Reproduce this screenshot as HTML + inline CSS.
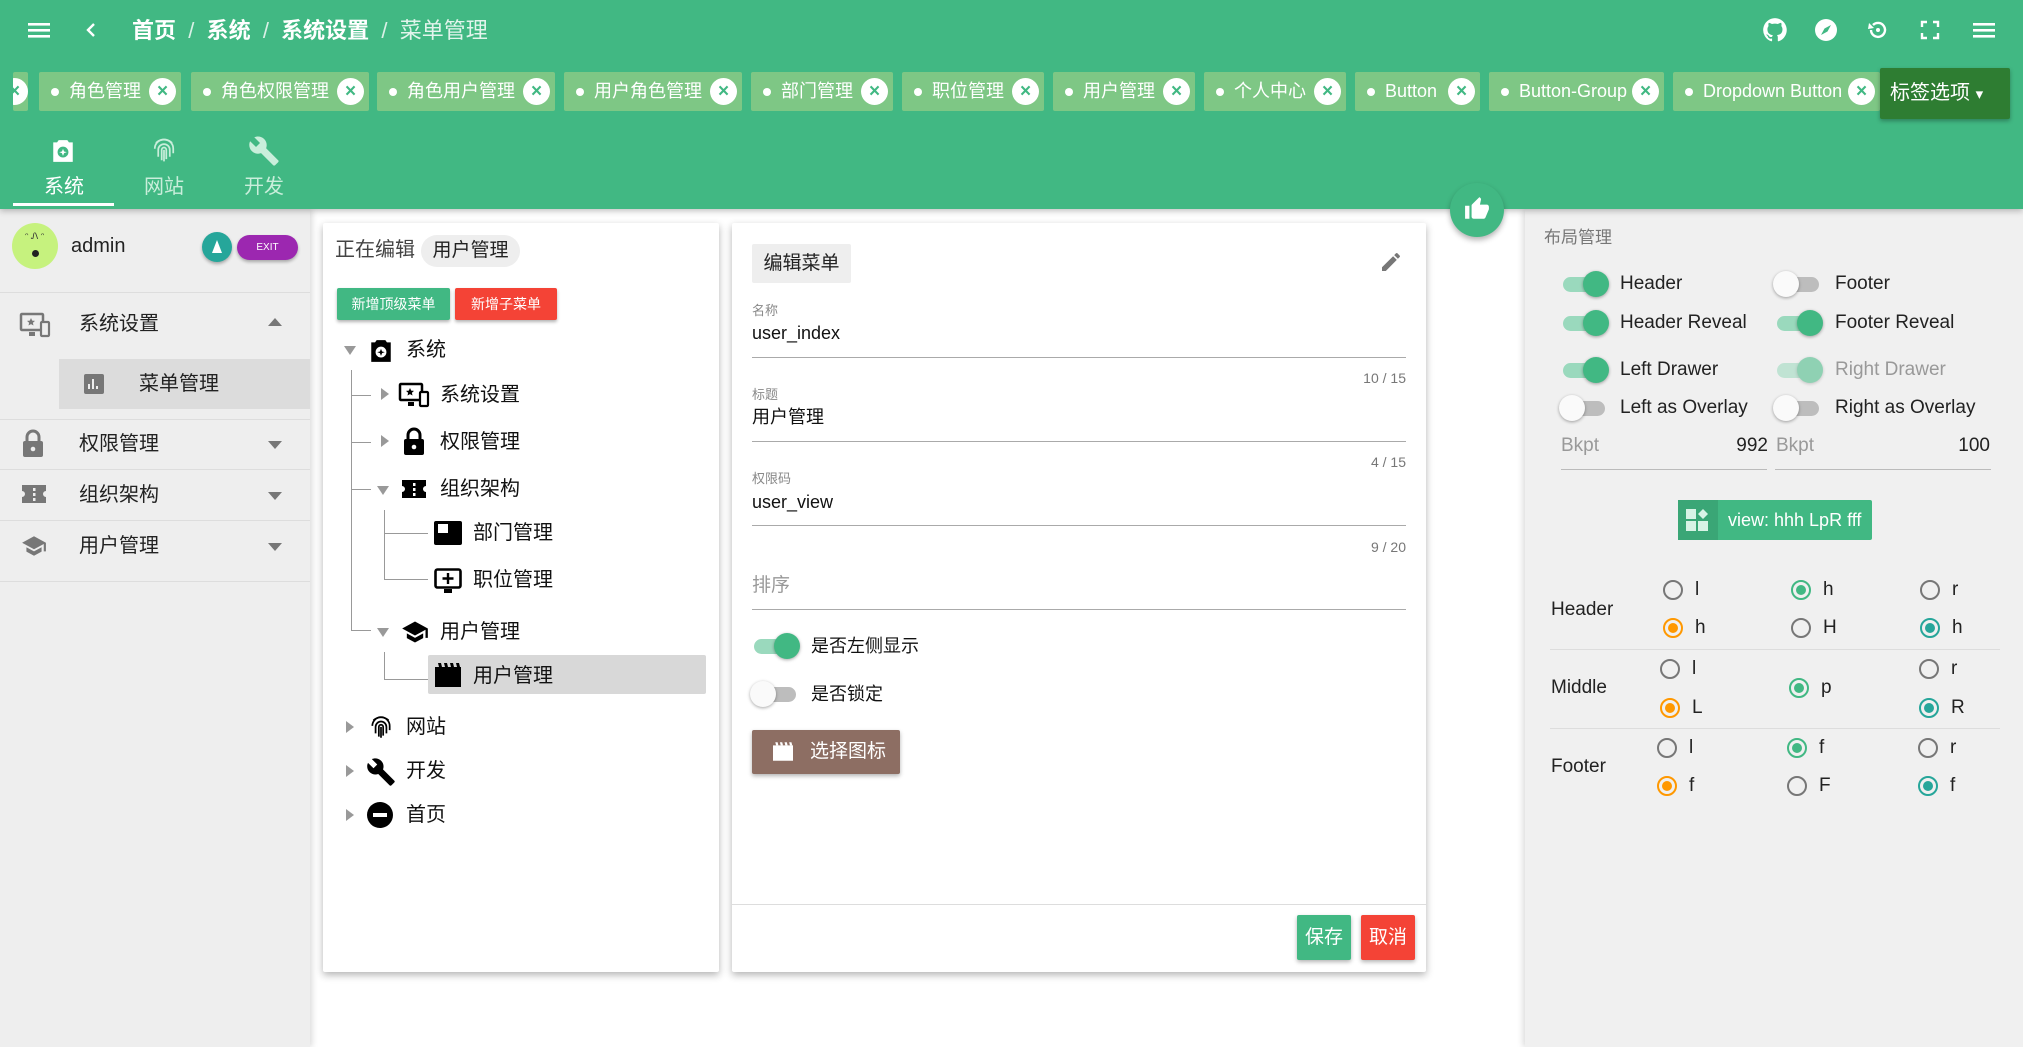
<!DOCTYPE html>
<html><head><meta charset="utf-8">
<style>
*{box-sizing:border-box;margin:0;padding:0}
body{width:2023px;height:1047px;position:relative;overflow:hidden;background:#fff;font-family:"Liberation Sans","Noto Sans CJK SC",sans-serif;color:#111}
.a{position:absolute}
.hd{left:0;top:0;width:2023px;height:209px;background:#41b883;box-shadow:0 2px 6px rgba(0,0,0,.25);z-index:5}
.bc{top:16px;font-size:22px;line-height:30px;color:#fff;font-weight:bold}
.tab{top:72px;height:39px;background:#7ec785;border-radius:2px;color:#fff;font-size:18px;line-height:39px;white-space:nowrap}
.tab .d{position:absolute;left:12px;top:16px;width:8px;height:8px;border-radius:50%;background:#fff}
.tab .t{position:absolute;left:30px;top:0}
.tab .x{position:absolute;right:5px;top:6px;width:27px;height:27px;border-radius:50%;background:#fff;color:#41b883;font-size:19px;line-height:27px;text-align:center;font-weight:bold}
.ld{left:0;top:209px;width:310px;height:838px;background:#eee;box-shadow:2px 0 6px rgba(0,0,0,.15)}
.rd{left:1525px;top:209px;width:498px;height:838px;background:#f0f0f0;box-shadow:-2px 0 6px rgba(0,0,0,.15)}
.ln{height:1px;background:#ddd}
.lt{font-size:20px;line-height:28px;color:#222}
.card{background:#fff;box-shadow:0 3px 8px rgba(0,0,0,.3);border-radius:2px}
.tt{font-size:20px;line-height:28px;color:#111}
.tri{width:0;height:0}
.fl{font-size:13px;color:#888;line-height:18px}
.fv{font-size:18px;line-height:24px;color:#111}
.fline{height:1px;background:#aaa;left:752px;width:654px}
.cnt{font-size:14px;color:#777;line-height:18px;text-align:right;width:100px;left:1306px}
.sw{width:50px;height:36px}
.sw .tr{position:absolute;left:4px;top:11px;width:42px;height:15px;border-radius:8px}
.sw .k{position:absolute;top:5px;width:26px;height:26px;border-radius:50%;box-shadow:0 1px 3px rgba(0,0,0,.35)}
.on .tr{background:#9ad9bd}.on .k{left:24px;background:#41b883}
.off .tr{background:#bdbdbd}.off .k{left:0;background:#fafafa}
.rl{font-size:19px;line-height:26px;color:#222}
.rad{width:20px;height:20px;border-radius:50%;border:2px solid #777}
.rad.g{border-color:#41b883}.rad.o{border-color:#ff9800}.rad.c{border-color:#26a69a}
.rad.g:after,.rad.o:after,.rad.c:after{content:"";position:absolute;left:3px;top:3px;width:10px;height:10px;border-radius:50%}
.rad.g:after{background:#41b883}.rad.o:after{background:#ff9800}.rad.c:after{background:#26a69a}
.rt{font-size:19px;line-height:24px;color:#222}
</style></head><body>

<div class="a hd">
  <svg class="a" style="left:28px;top:20px" width="22" height="20" viewBox="0 0 22 20"><rect y="3" width="22" height="2.6" fill="#fff"/><rect y="9" width="22" height="2.6" fill="#fff"/><rect y="15" width="22" height="2.6" fill="#fff"/></svg>
  <svg class="a" style="left:84px;top:21px" width="14" height="18" viewBox="0 0 14 18"><path d="M10 3 L4 9 L10 15" stroke="#fff" stroke-width="2.4" fill="none"/></svg>
  <div class="a bc" style="left:132px">首页 <span style="font-weight:normal;opacity:.8">&nbsp;/&nbsp;</span> 系统 <span style="font-weight:normal;opacity:.8">&nbsp;/&nbsp;</span> 系统设置 <span style="font-weight:normal;opacity:.8">&nbsp;/&nbsp;</span> <span style="font-weight:normal;opacity:.85">菜单管理</span></div>
  <svg class="a" style="left:1762px;top:17px" width="26" height="26" viewBox="0 0 24 24"><path fill="#fff" d="M12 1a11 11 0 0 0-3.5 21.4c.6.1.8-.2.8-.5v-2c-3.1.7-3.7-1.4-3.7-1.4-.5-1.3-1.200-1.6-1.2-1.6-1-.7.1-.7.1-.7 1.1.1 1.7 1.1 1.7 1.1 1 1.7 2.6 1.2 3.2.9.1-.7.4-1.2.7-1.5-2.5-.3-5.1-1.2-5.1-5.4 0-1.2.4-2.2 1.1-3-.1-.3-.5-1.4.1-2.9 0 0 .9-.3 3 1.1a10.4 10.4 0 0 1 5.5 0c2.1-1.4 3-1.1 3-1.1.6 1.5.2 2.6.1 2.9.7.8 1.1 1.8 1.1 3 0 4.2-2.6 5.1-5.1 5.4.4.4.8 1.1.8 2.1v3.1c0 .3.2.6.8.5A11 11 0 0 0 12 1z"/></svg>
  <svg class="a" style="left:1814px;top:18px" width="24" height="24" viewBox="0 0 24 24"><circle cx="12" cy="12" r="11" fill="#fff"/><path d="M17 7 L13.5 13.5 L7 17 L10.5 10.5Z" fill="#41b883"/></svg>
  <svg class="a" style="left:1866px;top:18px" width="24" height="24" viewBox="0 0 24 24"><path d="M5 12a7 7 0 1 0 2-5" stroke="#fff" stroke-width="2.4" fill="none"/><path d="M3 5 L8 10 L2 11Z" fill="#fff"/><circle cx="12" cy="12" r="2" fill="#fff"/></svg>
  <svg class="a" style="left:1920px;top:20px" width="20" height="20" viewBox="0 0 20 20"><path d="M2 7V2h5M13 2h5v5M18 13v5h-5M7 18H2v-5" stroke="#fff" stroke-width="2.4" fill="none"/></svg>
  <svg class="a" style="left:1972px;top:20px" width="24" height="20" viewBox="0 0 22 20"><rect y="3" width="22" height="2.6" fill="#fff"/><rect y="9" width="22" height="2.6" fill="#fff"/><rect y="15" width="22" height="2.6" fill="#fff"/></svg>

  <div class="a tab" style="left:13px;width:15px;overflow:hidden"><div class="x" style="right:2px;left:-12px">×</div></div>
  <div class="a tab" style="left:39px;width:142px"><i class="d"></i><span class="t">角色管理</span><b class="x">×</b></div>
  <div class="a tab" style="left:191px;width:178px"><i class="d"></i><span class="t">角色权限管理</span><b class="x">×</b></div>
  <div class="a tab" style="left:377px;width:178px"><i class="d"></i><span class="t">角色用户管理</span><b class="x">×</b></div>
  <div class="a tab" style="left:564px;width:178px"><i class="d"></i><span class="t">用户角色管理</span><b class="x">×</b></div>
  <div class="a tab" style="left:751px;width:142px"><i class="d"></i><span class="t">部门管理</span><b class="x">×</b></div>
  <div class="a tab" style="left:902px;width:142px"><i class="d"></i><span class="t">职位管理</span><b class="x">×</b></div>
  <div class="a tab" style="left:1053px;width:142px"><i class="d"></i><span class="t">用户管理</span><b class="x">×</b></div>
  <div class="a tab" style="left:1204px;width:142px"><i class="d"></i><span class="t">个人中心</span><b class="x">×</b></div>
  <div class="a tab" style="left:1355px;width:125px"><i class="d"></i><span class="t">Button</span><b class="x">×</b></div>
  <div class="a tab" style="left:1489px;width:175px"><i class="d"></i><span class="t">Button-Group</span><b class="x">×</b></div>
  <div class="a tab" style="left:1673px;width:207px"><i class="d"></i><span class="t">Dropdown Button</span><b class="x">×</b></div>
  <div class="a" style="left:1880px;top:68px;width:130px;height:51px;background:#2e7d32;box-shadow:0 2px 4px rgba(0,0,0,.3);border-radius:2px;color:#fff;font-size:20px;line-height:51px;padding-left:10px">标签选项 <span style="font-size:15px">▾</span></div>

  <svg class="a" style="left:50px;top:138px" width="26" height="26" viewBox="0 0 24 24"><path fill="#fff" d="M8 2h8l1.5 2H21v18H3V4h3.5z"/><circle cx="12" cy="13" r="5" fill="#41b883"/><path d="M12 10l1 2.5 2.5.5-2.5 1-1 2.5-1-2.5-2.5-1 2.5-.5z" fill="#fff"/></svg>
  <div class="a" style="left:44px;top:173px;font-size:20px;line-height:28px;color:#fff">系统</div>
  <div class="a" style="left:13px;top:203px;width:101px;height:3px;background:#fff"></div>
  <svg class="a" style="left:150px;top:136px" width="28" height="30" viewBox="0 0 24 26" fill="none" stroke="#c9eedb" stroke-width="1.5"><path d="M5 6a10 10 0 0 1 14 0"/><path d="M4 11a8 8 0 0 1 16 0v4"/><path d="M7 18v-6a5 5 0 0 1 10 0v6"/><path d="M10 21v-9a2 2 0 0 1 4 0v8"/><path d="M12 12v10"/></svg>
  <div class="a" style="left:144px;top:173px;font-size:20px;line-height:28px;color:#c9eedb">网站</div>
  <svg class="a" style="left:248px;top:134px" width="32" height="34" viewBox="0 0 24 24"><path fill="#c9eedb" d="M22.7 19l-9.1-9.1c.9-2.3.4-5-1.5-6.9-2-2-5-2.4-7.4-1.3L9 6 6 9 1.6 4.7C.4 7.1.9 10.1 2.9 12.1c1.9 1.9 4.6 2.4 6.9 1.5l9.1 9.1c.4.4 1 .4 1.4 0l2.3-2.3c.5-.4.5-1.1.1-1.4z"/></svg>
  <div class="a" style="left:244px;top:173px;font-size:20px;line-height:28px;color:#c9eedb">开发</div>
</div>

<div class="a" style="left:1450px;top:183px;width:54px;height:54px;border-radius:50%;background:#41b883;box-shadow:0 3px 6px rgba(0,0,0,.3);z-index:6">
  <svg class="a" style="left:14px;top:13px" width="26" height="26" viewBox="0 0 24 24"><path fill="#fff" d="M1 21h4V9H1zm22-11c0-1.1-.9-2-2-2h-6.3l1-4.6v-.3c0-.4-.2-.8-.4-1.1L14.2 1 7.6 7.6C7.2 7.9 7 8.4 7 9v10c0 1.1.9 2 2 2h9c.8 0 1.5-.5 1.8-1.2l3-7.1c.1-.2.2-.5.2-.7z"/></svg>
</div>

<div class="a ld">
  <div class="a" style="left:12px;top:14px;width:46px;height:46px;border-radius:50%;background:#c6f27e"></div>
  <div class="a" style="left:25px;top:22px;font-size:9px;color:#333">ᵔ Ꮑ ᵔ</div>
  <div class="a" style="left:32px;top:41px;width:7px;height:7px;border-radius:50%;background:#222"></div>
  <div class="a" style="left:71px;top:23px;font-size:20px;line-height:28px;color:#222">admin</div>
  <div class="a" style="left:202px;top:23px;width:30px;height:30px;border-radius:50%;background:#26a69a;box-shadow:0 2px 3px rgba(0,0,0,.3)"><div class="a tri" style="left:10px;top:8px;border-left:5px solid transparent;border-right:5px solid transparent;border-bottom:13px solid #fff"></div></div>
  <div class="a" style="left:237px;top:26px;width:61px;height:25px;border-radius:13px;background:#9c27b0;color:#fff;font-size:10px;line-height:25px;text-align:center;box-shadow:0 2px 3px rgba(0,0,0,.3)">EXIT</div>
  <div class="a ln" style="left:0;top:83px;width:310px"></div>
  <svg class="a" style="left:19px;top:103px" width="32" height="26" viewBox="0 0 32 26"><rect x="2" y="2" width="22" height="16" rx="1" fill="none" stroke="#777" stroke-width="2.5"/><path d="M10 20h6v4h-6z" fill="#777"/><rect x="22" y="10" width="8" height="14" rx="1" fill="#eee" stroke="#777" stroke-width="2.2"/><path d="M12 6l1.2 2.6 2.8.3-2.1 1.8.6 2.8-2.5-1.4-2.5 1.4.6-2.8-2.1-1.8 2.8-.3z" fill="#777"/></svg>
  <div class="a lt" style="left:79px;top:101px">系统设置</div>
  <div class="a tri" style="left:268px;top:109px;border-left:7px solid transparent;border-right:7px solid transparent;border-bottom:8px solid #777"></div>
  <div class="a" style="left:59px;top:150px;width:251px;height:50px;background:#dcdcdc"></div>
  <svg class="a" style="left:82px;top:163px" width="24" height="24" viewBox="0 0 24 24"><rect x="2" y="2" width="20" height="20" rx="2" fill="#777"/><path d="M7 17v-5M11 17V7M15 17v-3" stroke="#eee" stroke-width="2"/></svg>
  <div class="a lt" style="left:139px;top:161px">菜单管理</div>
  <div class="a ln" style="left:0;top:210px;width:310px"></div>
  <svg class="a" style="left:22px;top:220px" width="22" height="28" viewBox="0 0 22 28"><path d="M5 12V8a6 6 0 0 1 12 0v4" stroke="#777" stroke-width="3" fill="none"/><rect x="1" y="12" width="20" height="16" rx="2" fill="#777"/><circle cx="11" cy="20" r="2.3" fill="#eee"/></svg>
  <div class="a lt" style="left:79px;top:221px">权限管理</div>
  <div class="a tri" style="left:268px;top:232px;border-left:7px solid transparent;border-right:7px solid transparent;border-top:8px solid #777"></div>
  <div class="a ln" style="left:0;top:260px;width:310px"></div>
  <svg class="a" style="left:20px;top:274px" width="28" height="22" viewBox="0 0 28 22"><path d="M2 2h24v6a3 3 0 0 0 0 6v6H2v-6a3 3 0 0 0 0-6z" fill="#777"/><rect x="13" y="5" width="2.5" height="3" fill="#eee"/><rect x="13" y="10" width="2.5" height="3" fill="#eee"/><rect x="13" y="15" width="2.5" height="3" fill="#eee"/></svg>
  <div class="a lt" style="left:79px;top:272px">组织架构</div>
  <div class="a tri" style="left:268px;top:283px;border-left:7px solid transparent;border-right:7px solid transparent;border-top:8px solid #777"></div>
  <div class="a ln" style="left:0;top:311px;width:310px"></div>
  <svg class="a" style="left:19px;top:324px" width="30" height="26" viewBox="0 0 24 24"><path fill="#777" d="M5 13.2v4L12 21l7-3.8v-4L12 17zM12 3L1 9l11 6 9-4.9V17h2V9z"/></svg>
  <div class="a lt" style="left:79px;top:323px">用户管理</div>
  <div class="a tri" style="left:268px;top:334px;border-left:7px solid transparent;border-right:7px solid transparent;border-top:8px solid #777"></div>
  <div class="a ln" style="left:0;top:372px;width:310px"></div>
</div>

<div class="a card" style="left:323px;top:223px;width:396px;height:749px"></div>
<div class="a" style="left:335px;top:235px;font-size:20px;line-height:30px;color:#444">正在编辑</div>
<div class="a" style="left:421px;top:235px;width:99px;height:32px;border-radius:16px;background:#eee;font-size:19px;line-height:32px;text-align:center;color:#222">用户管理</div>
<div class="a" style="left:337px;top:288px;width:113px;height:32px;background:#41b883;color:#fff;font-size:14px;line-height:32px;text-align:center;box-shadow:0 2px 3px rgba(0,0,0,.3);border-radius:2px">新增顶级菜单</div>
<div class="a" style="left:455px;top:288px;width:102px;height:32px;background:#f44336;color:#fff;font-size:14px;line-height:32px;text-align:center;box-shadow:0 2px 3px rgba(0,0,0,.3);border-radius:2px">新增子菜单</div>

<div class="a" style="left:351px;top:370px;width:1px;height:261px;background:#999"></div>
<div class="a" style="left:351px;top:395px;width:20px;height:1px;background:#999"></div>
<div class="a" style="left:351px;top:442px;width:20px;height:1px;background:#999"></div>
<div class="a" style="left:351px;top:489px;width:20px;height:1px;background:#999"></div>
<div class="a" style="left:351px;top:630px;width:20px;height:1px;background:#999"></div>
<div class="a" style="left:384px;top:510px;width:1px;height:70px;background:#999"></div>
<div class="a" style="left:384px;top:533px;width:44px;height:1px;background:#999"></div>
<div class="a" style="left:384px;top:579px;width:44px;height:1px;background:#999"></div>
<div class="a" style="left:384px;top:652px;width:1px;height:28px;background:#999"></div>
<div class="a" style="left:384px;top:679px;width:44px;height:1px;background:#999"></div>
<div class="a" style="left:428px;top:655px;width:278px;height:39px;background:#d8d8d8;border-radius:2px"></div>

<div class="a tri" style="left:344px;top:346px;border-left:6px solid transparent;border-right:6px solid transparent;border-top:9px solid #999"></div>
<svg class="a" style="left:368px;top:338px" width="26" height="26" viewBox="0 0 24 24"><path d="M8 2h8l1.5 2H21v18H3V4h3.5z"/><circle cx="12" cy="13" r="5" fill="#fff"/><path d="M12 10l1 2.5 2.5.5-2.5 1-1 2.5-1-2.5-2.5-1 2.5-.5z"/></svg>
<div class="a tt" style="left:406px;top:336px">系统</div>

<div class="a tri" style="left:381px;top:388px;border-top:6px solid transparent;border-bottom:6px solid transparent;border-left:8px solid #999"></div>
<svg class="a" style="left:398px;top:381px" width="32" height="28" viewBox="0 0 32 26"><rect x="2" y="2" width="22" height="16" rx="1" fill="none" stroke="#000" stroke-width="2.5"/><path d="M10 20h6v4h-6z"/><rect x="22" y="10" width="8" height="14" rx="1" fill="#fff" stroke="#000" stroke-width="2.2"/><path d="M12 6l1.2 2.6 2.8.3-2.1 1.8.6 2.8-2.5-1.4-2.5 1.4.6-2.8-2.1-1.8 2.8-.3z"/></svg>
<div class="a tt" style="left:440px;top:381px">系统设置</div>

<div class="a tri" style="left:381px;top:435px;border-top:6px solid transparent;border-bottom:6px solid transparent;border-left:8px solid #999"></div>
<svg class="a" style="left:403px;top:427px" width="22" height="28" viewBox="0 0 22 28"><path d="M5 12V8a6 6 0 0 1 12 0v4" stroke="#000" stroke-width="3" fill="none"/><rect x="1" y="12" width="20" height="16" rx="2"/><circle cx="11" cy="20" r="2.3" fill="#fff"/></svg>
<div class="a tt" style="left:440px;top:428px">权限管理</div>

<div class="a tri" style="left:377px;top:486px;border-left:6px solid transparent;border-right:6px solid transparent;border-top:9px solid #999"></div>
<svg class="a" style="left:400px;top:478px" width="28" height="22" viewBox="0 0 28 22"><path d="M2 2h24v6a3 3 0 0 0 0 6v6H2v-6a3 3 0 0 0 0-6z"/><rect x="13" y="5" width="2.5" height="3" fill="#fff"/><rect x="13" y="10" width="2.5" height="3" fill="#fff"/><rect x="13" y="15" width="2.5" height="3" fill="#fff"/></svg>
<div class="a tt" style="left:440px;top:475px">组织架构</div>

<svg class="a" style="left:434px;top:521px" width="28" height="24" viewBox="0 0 28 24"><rect x="0" y="0" width="28" height="24" rx="2"/><rect x="4" y="3" width="10" height="9" fill="#fff"/></svg>
<div class="a tt" style="left:473px;top:519px">部门管理</div>

<svg class="a" style="left:434px;top:568px" width="28" height="26" viewBox="0 0 28 26"><rect x="1.5" y="1.5" width="25" height="18" rx="2" fill="none" stroke="#000" stroke-width="2.6"/><path d="M10 21h8v4h-8z"/><path d="M14 5v11M8.5 10.5h11" stroke="#000" stroke-width="2.4"/></svg>
<div class="a tt" style="left:473px;top:566px">职位管理</div>

<div class="a tri" style="left:377px;top:628px;border-left:6px solid transparent;border-right:6px solid transparent;border-top:9px solid #999"></div>
<svg class="a" style="left:400px;top:618px" width="30" height="28" viewBox="0 0 24 24"><path d="M5 13.2v4L12 21l7-3.8v-4L12 17zM12 3L1 9l11 6 9-4.9V17h2V9z"/></svg>
<div class="a tt" style="left:440px;top:618px">用户管理</div>

<svg class="a" style="left:435px;top:663px" width="26" height="24" viewBox="0 0 26 24"><path d="M0 4h26v20H0z"/><path d="M3 0h3l1 4H4zM9 0h3l1 4h-3zM15 0h3l1 4h-3zM21 0h3l1 4h-3z"/></svg>
<div class="a tt" style="left:473px;top:662px">用户管理</div>

<div class="a tri" style="left:346px;top:721px;border-top:6px solid transparent;border-bottom:6px solid transparent;border-left:8px solid #999"></div>
<svg class="a" style="left:368px;top:713px" width="26" height="30" viewBox="0 0 24 26" fill="none" stroke="#000" stroke-width="1.6"><path d="M5 6a10 10 0 0 1 14 0"/><path d="M4 11a8 8 0 0 1 16 0v4"/><path d="M7 18v-6a5 5 0 0 1 10 0v6"/><path d="M10 21v-9a2 2 0 0 1 4 0v8"/><path d="M12 12v10"/></svg>
<div class="a tt" style="left:406px;top:713px">网站</div>

<div class="a tri" style="left:346px;top:765px;border-top:6px solid transparent;border-bottom:6px solid transparent;border-left:8px solid #999"></div>
<svg class="a" style="left:366px;top:757px" width="30" height="30" viewBox="0 0 24 24"><path d="M22.7 19l-9.1-9.1c.9-2.3.4-5-1.5-6.9-2-2-5-2.4-7.4-1.3L9 6 6 9 1.6 4.7C.4 7.1.9 10.1 2.9 12.1c1.9 1.9 4.6 2.4 6.9 1.5l9.1 9.1c.4.4 1 .4 1.4 0l2.3-2.3c.5-.4.5-1.1.1-1.4z"/></svg>
<div class="a tt" style="left:406px;top:757px">开发</div>

<div class="a tri" style="left:346px;top:809px;border-top:6px solid transparent;border-bottom:6px solid transparent;border-left:8px solid #999"></div>
<svg class="a" style="left:367px;top:802px" width="26" height="26" viewBox="0 0 26 26"><circle cx="13" cy="13" r="13"/><rect x="6" y="11" width="14" height="4" fill="#fff"/></svg>
<div class="a tt" style="left:406px;top:801px">首页</div>

<div class="a card" style="left:732px;top:223px;width:694px;height:749px"></div>
<div class="a" style="left:752px;top:244px;width:99px;height:39px;background:#eee;border-radius:2px;font-size:19px;line-height:39px;text-align:center;color:#222">编辑菜单</div>
<svg class="a" style="left:1379px;top:250px" width="24" height="24" viewBox="0 0 24 24"><path fill="#777" d="M3 17.3V21h3.8L17.8 9.9l-3.7-3.7zM20.7 7c.4-.4.4-1 0-1.4l-2.3-2.3c-.4-.4-1-.4-1.4 0l-1.8 1.8 3.7 3.7z"/></svg>
<div class="a fl" style="left:752px;top:302px">名称</div>
<div class="a fv" style="left:752px;top:321px">user_index</div>
<div class="a fline" style="top:357px"></div>
<div class="a cnt" style="top:369px">10 / 15</div>
<div class="a fl" style="left:752px;top:386px">标题</div>
<div class="a fv" style="left:752px;top:405px">用户管理</div>
<div class="a fline" style="top:441px"></div>
<div class="a cnt" style="top:453px">4 / 15</div>
<div class="a fl" style="left:752px;top:470px">权限码</div>
<div class="a fv" style="left:752px;top:490px">user_view</div>
<div class="a fline" style="top:525px"></div>
<div class="a cnt" style="top:538px">9 / 20</div>
<div class="a" style="left:752px;top:573px;font-size:19px;line-height:26px;color:#999">排序</div>
<div class="a fline" style="top:609px"></div>
<div class="a sw on" style="left:750px;top:628px"><i class="tr"></i><i class="k"></i></div>
<div class="a" style="left:811px;top:633px;font-size:18px;line-height:26px">是否左侧显示</div>
<div class="a sw off" style="left:750px;top:676px"><i class="tr"></i><i class="k"></i></div>
<div class="a" style="left:811px;top:681px;font-size:18px;line-height:26px">是否锁定</div>
<div class="a" style="left:752px;top:730px;width:148px;height:44px;background:#8d6e63;border-radius:2px;box-shadow:0 2px 4px rgba(0,0,0,.3);color:#fff;font-size:19px;line-height:44px">
  <svg class="a" style="left:21px;top:12px" width="20" height="19" viewBox="0 0 26 24"><path fill="#fff" d="M0 4h26v20H0z"/><path fill="#fff" d="M3 0h3l1 4H4zM9 0h3l1 4h-3zM15 0h3l1 4h-3zM21 0h3l1 4h-3z"/></svg>
  <span class="a" style="left:58px;top:0">选择图标</span></div>
<div class="a" style="left:732px;top:904px;width:694px;height:1px;background:#ddd"></div>
<div class="a" style="left:1297px;top:915px;width:54px;height:45px;background:#41b883;color:#fff;font-size:19px;line-height:45px;text-align:center;border-radius:2px;box-shadow:0 2px 4px rgba(0,0,0,.3)">保存</div>
<div class="a" style="left:1361px;top:915px;width:54px;height:45px;background:#f44336;color:#fff;font-size:19px;line-height:45px;text-align:center;border-radius:2px;box-shadow:0 2px 4px rgba(0,0,0,.3)">取消</div>

<div class="a rd"></div>
<div class="a" style="left:1544px;top:226px;font-size:17px;line-height:24px;color:#777">布局管理</div>
<div class="a sw on" style="left:1559px;top:266px"><i class="tr"></i><i class="k"></i></div><div class="a rl" style="left:1620px;top:271px">Header</div>
<div class="a sw off" style="left:1773px;top:266px"><i class="tr"></i><i class="k"></i></div><div class="a rl" style="left:1835px;top:271px">Footer</div>
<div class="a sw on" style="left:1559px;top:305px"><i class="tr"></i><i class="k"></i></div><div class="a rl" style="left:1620px;top:310px">Header Reveal</div>
<div class="a sw on" style="left:1773px;top:305px"><i class="tr"></i><i class="k"></i></div><div class="a rl" style="left:1835px;top:310px">Footer Reveal</div>
<div class="a sw on" style="left:1559px;top:352px"><i class="tr"></i><i class="k"></i></div><div class="a rl" style="left:1620px;top:357px">Left Drawer</div>
<div class="a sw on" style="left:1773px;top:352px;opacity:.55"><i class="tr"></i><i class="k"></i></div><div class="a rl" style="left:1835px;top:357px;color:#999">Right Drawer</div>
<div class="a sw off" style="left:1559px;top:390px"><i class="tr"></i><i class="k"></i></div><div class="a rl" style="left:1620px;top:395px">Left as Overlay</div>
<div class="a sw off" style="left:1773px;top:390px"><i class="tr"></i><i class="k"></i></div><div class="a rl" style="left:1835px;top:395px">Right as Overlay</div>
<div class="a rl" style="left:1561px;top:433px;color:#999">Bkpt</div>
<div class="a rl" style="left:1700px;top:433px;width:68px;text-align:right">992</div>
<div class="a rl" style="left:1776px;top:433px;color:#999">Bkpt</div>
<div class="a rl" style="left:1920px;top:433px;width:70px;text-align:right">100</div>
<div class="a" style="left:1561px;top:469px;width:206px;height:1px;background:#bbb"></div>
<div class="a" style="left:1775px;top:469px;width:216px;height:1px;background:#bbb"></div>
<div class="a" style="left:1678px;top:500px;width:194px;height:40px;background:#41b883;border-radius:2px;color:#fff;font-size:18px;line-height:40px">
  <div class="a" style="left:0;top:0;width:40px;height:40px;background:#3aa676"></div>
  <svg class="a" style="left:8px;top:9px" width="24" height="22" viewBox="0 0 24 22"><rect x="0" y="0" width="10" height="10" fill="#d8f3e6"/><rect x="0" y="12" width="10" height="10" fill="#d8f3e6"/><rect x="12" y="12" width="10" height="10" fill="#d8f3e6"/><path d="M17 0l5 5-5 5-5-5z" fill="#d8f3e6"/></svg>
  <span class="a" style="left:50px;top:0">view: hhh LpR fff</span></div>

<div class="a rt" style="left:1551px;top:598px">Header</div>
<div class="a rt" style="left:1551px;top:676px">Middle</div>
<div class="a rt" style="left:1551px;top:755px">Footer</div>
<div class="a" style="left:1550px;top:649px;width:450px;height:1px;background:#ddd"></div>
<div class="a" style="left:1550px;top:728px;width:450px;height:1px;background:#ddd"></div>

<div class="a rad" style="left:1663px;top:580px"></div><div class="a rt" style="left:1695px;top:578px">l</div>
<div class="a rad g" style="left:1791px;top:580px"></div><div class="a rt" style="left:1823px;top:578px">h</div>
<div class="a rad" style="left:1920px;top:580px"></div><div class="a rt" style="left:1952px;top:578px">r</div>
<div class="a rad o" style="left:1663px;top:618px"></div><div class="a rt" style="left:1695px;top:616px">h</div>
<div class="a rad" style="left:1791px;top:618px"></div><div class="a rt" style="left:1823px;top:616px">H</div>
<div class="a rad c" style="left:1920px;top:618px"></div><div class="a rt" style="left:1952px;top:616px">h</div>

<div class="a rad" style="left:1660px;top:659px"></div><div class="a rt" style="left:1692px;top:657px">l</div>
<div class="a rad g" style="left:1789px;top:678px"></div><div class="a rt" style="left:1821px;top:676px">p</div>
<div class="a rad" style="left:1919px;top:659px"></div><div class="a rt" style="left:1951px;top:657px">r</div>
<div class="a rad o" style="left:1660px;top:698px"></div><div class="a rt" style="left:1692px;top:696px">L</div>
<div class="a rad c" style="left:1919px;top:698px"></div><div class="a rt" style="left:1951px;top:696px">R</div>

<div class="a rad" style="left:1657px;top:738px"></div><div class="a rt" style="left:1689px;top:736px">l</div>
<div class="a rad g" style="left:1787px;top:738px"></div><div class="a rt" style="left:1819px;top:736px">f</div>
<div class="a rad" style="left:1918px;top:738px"></div><div class="a rt" style="left:1950px;top:736px">r</div>
<div class="a rad o" style="left:1657px;top:776px"></div><div class="a rt" style="left:1689px;top:774px">f</div>
<div class="a rad" style="left:1787px;top:776px"></div><div class="a rt" style="left:1819px;top:774px">F</div>
<div class="a rad c" style="left:1918px;top:776px"></div><div class="a rt" style="left:1950px;top:774px">f</div>

</body></html>
